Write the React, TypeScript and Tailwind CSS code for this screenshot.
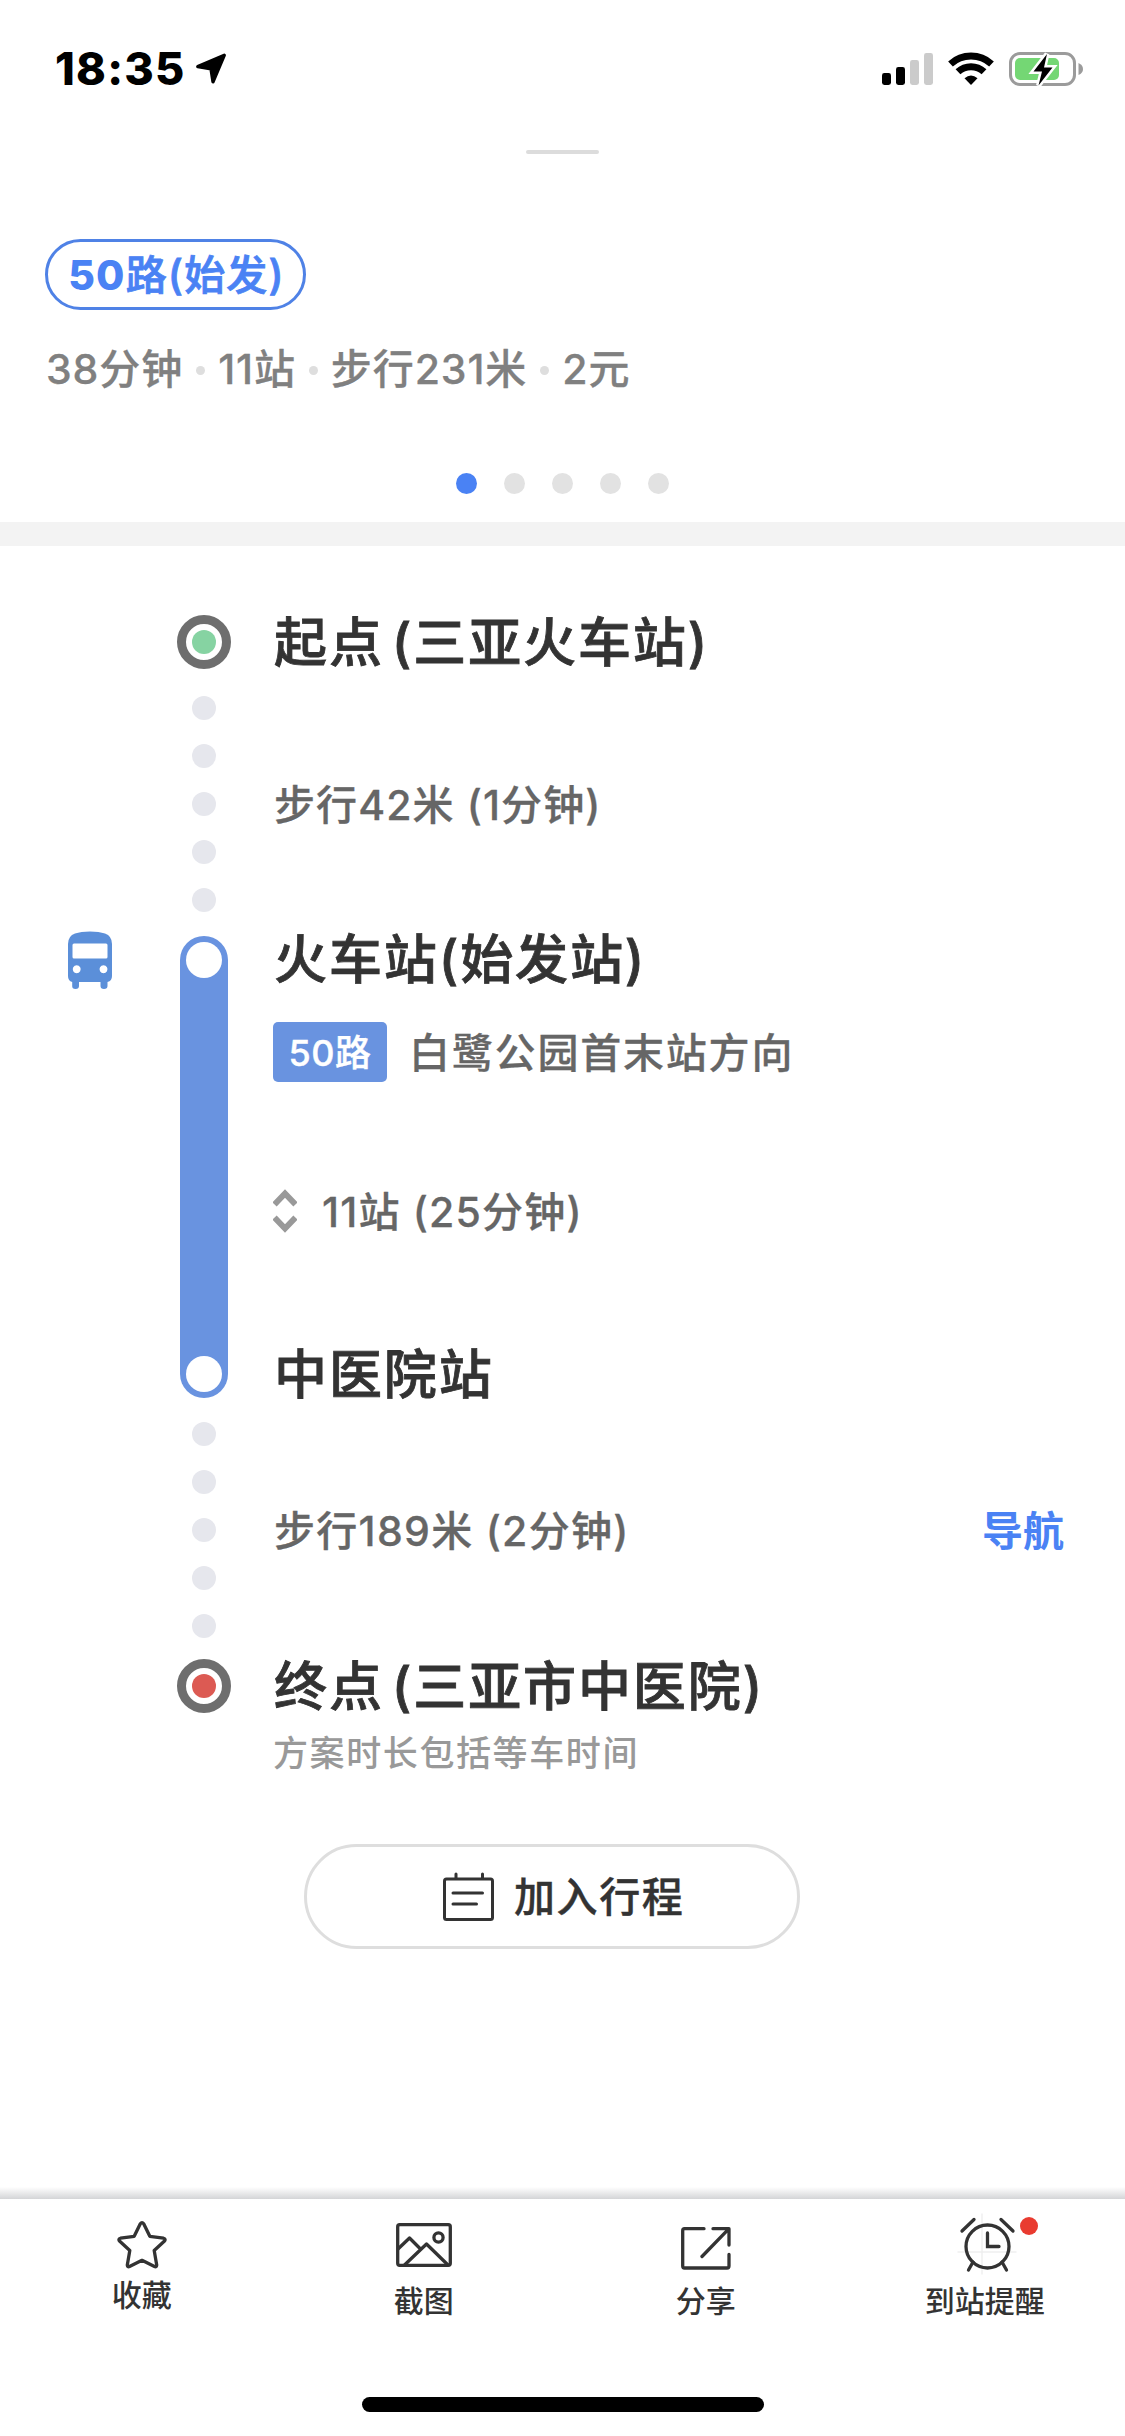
import React from "react";

const ink = "#333333";

function StatusBar() {
  return (
    <div className="flex h-[150px] items-start justify-between pl-[55px] pr-[42px]">
      <div className="flex items-start">
        <span className="mt-[46px] w-[140px] text-[45px] font-extrabold leading-[46px] tracking-[1.2px] text-black">18:35</span>
        <svg className="mt-[53px]" width="32" height="32" viewBox="0 0 32 32">
          <path d="M29.300 2.200 2.800 13.500 16 15.800 18 28.800Z" fill="#000" stroke="#000" strokeWidth="3.400" strokeLinejoin="round" />
        </svg>
      </div>
      <svg className="mt-[50px]" width="202" height="38" viewBox="0 0 202 38">
        <rect x="1" y="23" width="9" height="12" rx="2.4" fill="#000" />
        <rect x="15" y="17" width="9" height="18" rx="2.4" fill="#000" />
        <rect x="29" y="10" width="9" height="25" rx="2.4" fill="#cbcbcb" />
        <rect x="43" y="3" width="9" height="32" rx="2.4" fill="#cbcbcb" />
        <g fill="none" stroke="#000">
          <path d="M69.500 14A30.500 30.500 0 0 1 110.500 14" strokeWidth="7" />
          <path d="M77 21.800A19 19 0 0 1 103 21.800" strokeWidth="7" />
        </g>
        <path d="M83.500 28.300Q90 22.500 96.500 28.300L90 35Z" fill="#000" />
        <rect x="129.500" y="3.500" width="64" height="31" rx="9.500" fill="none" stroke="#9b9b9b" strokeWidth="3" />
        <path d="M197.500 13Q202 15 202 19T197.500 25Z" fill="#9b9b9b" />
        <rect x="134" y="8" width="44" height="22" rx="5" fill="#74d774" />
        <path d="M166 4 152.500 21.500H161L157.500 35.500 171.500 17.500H163Z" fill="#000" stroke="#fff" strokeWidth="5" paintOrder="stroke" />
      </svg>
    </div>
  );
}

function Separator() {
  return <span className="ml-[13px] mr-[13px] mt-[2px] size-[9px] rounded-full bg-[#dedede]" />;
}

function RouteSummary() {
  return (
    <div className="flex h-[372px] flex-col">
      <div className="mx-auto h-[4px] w-[73px] rounded-full bg-[#dcdcdc]" />
      <div className="ml-[45px] mt-[85px] flex h-[71px] w-[261px] items-center justify-center whitespace-nowrap rounded-full border-[3px] border-[#4f82e6] pl-[2px] pt-[2px] text-[41px] leading-none tracking-[1.200px] text-[#4a82f4]">
        <span className="font-extrabold">50</span>
        <span className="font-medium [-webkit-text-stroke:0.800px_#4a82f4]">路(始发)</span>
      </div>
      <div className="ml-[46px] mt-[36px] flex h-[46px] items-center whitespace-nowrap text-[41px] font-medium leading-none tracking-[0.900px] text-[#808080] [-webkit-text-stroke:0.300px_#808080]">
        <span>38分钟</span>
        <Separator />
        <span>11站</span>
        <Separator />
        <span>步行231米</span>
        <Separator />
        <span>2元</span>
      </div>
      <div className="mt-[81px] flex justify-center gap-[27px]">
        <span className="size-[21px] rounded-full bg-[#4a82f4]" />
        <span className="size-[21px] rounded-full bg-[#e2e2e2]" />
        <span className="size-[21px] rounded-full bg-[#e2e2e2]" />
        <span className="size-[21px] rounded-full bg-[#e2e2e2]" />
        <span className="size-[21px] rounded-full bg-[#e2e2e2]" />
      </div>
    </div>
  );
}

function Ring({ fill }: { fill: string }) {
  return (
    <div className="flex size-[54px] shrink-0 items-center justify-center rounded-full border-[9px] border-[#6e6e6e]">
      <span className={`size-[24px] rounded-full ${fill}`} />
    </div>
  );
}

function WalkDots() {
  return (
    <div className="flex h-[216px] w-[54px] shrink-0 flex-col items-center justify-between">
      {[0, 1, 2, 3, 4].map((i) => (
        <span key={i} className="size-[24px] rounded-full bg-[#e6e7ed]" />
      ))}
    </div>
  );
}

function BusIcon() {
  return (
    <svg width="44" height="58" viewBox="0 0 44 58">
      <path
        fill="#5b8fd9"
        fillRule="evenodd"
        d="M0 13Q0 5 7 2.500Q13 0.500 22 0.500T37 2.500Q44 5 44 13V45Q44 50 39.500 51V55Q39.500 58 36 58T32.500 55V51H11V55Q11 58 7.500 58T4.200 55V51Q0 50 0 45ZM6 12.500Q4.500 12.500 4.500 14V26Q4.500 27.500 6 27.500H38Q39.500 27.500 39.500 26V14Q39.500 12.500 38 12.500ZM8.700 34.300a4 4 0 1 0 .01 0ZM35.500 34.300a4 4 0 1 0 .01 0Z"
      />
    </svg>
  );
}

const title =
  "whitespace-nowrap pt-[2px] text-[53px] font-medium leading-[52px] tracking-[1.900px] text-[#333333] [word-spacing:-8px] [-webkit-text-stroke:0.800px_#333333]";
const detail =
  "whitespace-nowrap pt-[2px] text-[41px] font-medium leading-[40px] text-[#666666] [-webkit-text-stroke:0.300px_#666666]";

function Timeline() {
  return (
    <div className="flex flex-col pl-[177px] pt-[69px]">
      <div className="flex items-center">
        <Ring fill="bg-[#86d3a2]" />
        <span className={`ml-[43px] ${title}`}>起点 (三亚火车站)</span>
      </div>

      <div className="mt-[27px] flex items-center">
        <WalkDots />
        <span className={`ml-[43px] tracking-[1.100px] ${detail}`}>步行42米 (1分钟)</span>
      </div>

      <div className="-ml-[109px] mt-[24px] flex h-[462px]">
        <div className="-mt-[5px] w-[112px] shrink-0">
          <BusIcon />
        </div>
        <div className="flex h-[462px] w-[48px] shrink-0 flex-col items-center justify-between rounded-full bg-[#6993e0] py-[6px]">
          <span className="size-[36px] rounded-full bg-white" />
          <span className="size-[36px] rounded-full bg-white" />
        </div>
        <div className="ml-[45px] flex flex-col items-start">
          <span className={`-mt-[4px] ml-[1px] ${title}`}>火车站(始发站)</span>
          <div className="mt-[36px] flex h-[60px] items-center">
            <span className="flex h-[60px] w-[114px] items-center justify-center rounded-[5px] bg-[#6993e0] pt-[2px] text-[36px] font-medium leading-none tracking-[0.500px] text-white [-webkit-text-stroke:0.400px_#fff]">
              50路
            </span>
            <span className={`ml-[22px] tracking-[1.800px] ${detail}`}>白鹭公园首末站方向</span>
          </div>
          <div className="mt-[107px] flex h-[44px] items-center">
            <svg width="24" height="44" viewBox="0 0 24 44" fill="none" stroke="#999" strokeWidth="6">
              <path d="M1.500 15.500 12 4.500 22.500 15.500M1.500 28.500 12 39.500 22.500 28.500" />
            </svg>
            <span className={`ml-[25px] tracking-[1.200px] ${detail}`}>11站 (25分钟)</span>
          </div>
          <span className={`ml-[1px] mt-[114px] ${title}`}>中医院站</span>
        </div>
      </div>

      <div className="mt-[24px] flex items-center">
        <WalkDots />
        <span className={`ml-[43px] tracking-[1.300px] ${detail}`}>步行189米 (2分钟)</span>
        <span className="ml-auto mr-[61px] pt-[2px] text-[41px] font-bold leading-[40px] text-[#4a82f4]">导航</span>
      </div>

      <div className="mt-[21px] flex items-center">
        <Ring fill="bg-[#dc5a53]" />
        <span className={`ml-[43px] ${title}`}>终点 (三亚市中医院)</span>
      </div>
      <span className="ml-[96px] mt-[22px] whitespace-nowrap text-[35px] font-medium leading-[36px] tracking-[1.600px] text-[#999999]">
        方案时长包括等车时间
      </span>
    </div>
  );
}

function AddTripButton() {
  return (
    <button className="ml-[304px] mt-[73px] flex h-[105px] w-[496px] items-center rounded-[54px] border-[3px] border-[#dedede] pl-[136px]">
      <svg width="52" height="50" viewBox="0 0 52 50" fill="none" stroke={ink} strokeWidth="3" strokeLinecap="round">
        <rect x="1.500" y="7" width="48" height="40.500" rx="2" />
        <path d="M13 2V6M39.500 2V6M10 21H39.500M10 32H33.500" />
      </svg>
      <span className="ml-[19px] whitespace-nowrap text-[41px] font-medium leading-[42px] tracking-[1.600px] text-[#333333] [-webkit-text-stroke:0.400px_#333333]">
        加入行程
      </span>
    </button>
  );
}

const tabLabel =
  "whitespace-nowrap text-[30px] font-medium leading-[30px] text-[#333333]";

function TabBar() {
  return (
    <div className="mt-auto">
      <div className="h-[12px] bg-linear-to-b from-white to-[#d4d5d7]" />
      <div className="grid h-[198px] grid-cols-4 bg-white pl-[3px]">
        <div className="flex flex-col items-center pr-[3px] pt-[22px]">
          <svg width="50" height="48" viewBox="0 0 50 48" fill="none" stroke={ink} strokeWidth="3.300" strokeLinejoin="round">
            <path d="M23.300 2.800Q25 .7 26.700 2.800L32.800 15.300 46.500 17.200Q49 18 47.500 20L37.200 29.500 39.700 44Q39.500 46.500 37.500 45.500L25 39.300 12.500 45.500Q10.500 46.500 10.300 44L12.800 29.500 2.500 20Q1 18 3.500 17.200L17.200 15.300Z" />
          </svg>
          <span className={`mt-[11px] ${tabLabel}`}>收藏</span>
        </div>
        <div className="flex flex-col items-center pt-[24px]">
          <svg width="56" height="44" viewBox="0 0 56 44" fill="none" stroke={ink} strokeWidth="3.300" strokeLinejoin="round">
            <rect x="1.700" y="1.700" width="52.600" height="40.600" rx="2" />
            <circle cx="42.500" cy="14.500" r="4.600" />
            <path d="M2 26 13.500 15 25 26.500M8.500 42 30.500 21 52 42" />
          </svg>
          <span className={`mt-[19px] ${tabLabel}`}>截图</span>
        </div>
        <div className="flex flex-col items-center pl-[3px] pt-[28px]">
          <svg width="50" height="43" viewBox="0 0 50 43" fill="none" stroke={ink} strokeWidth="3.300" strokeLinecap="round" strokeLinejoin="round">
            <path d="M23 1.700H3.500Q1.700 1.700 1.700 3.700V39Q1.700 41 3.500 41H46Q48 41 48 39V27.500M32 1.700H48V18M47.500 2.200 21 29.500" />
          </svg>
          <span className={`mt-[16px] ${tabLabel}`}>分享</span>
        </div>
        <div className="flex flex-col items-center pt-[14px]">
          <div className="relative ml-[4px]">
            <svg width="60" height="62" viewBox="0 0 60 62" fill="none" stroke={ink} strokeWidth="3.300" strokeLinecap="round">
              <path d="M25 1V61M1 39H59" stroke="#efefef" strokeWidth="1.500" />
              <circle cx="30.500" cy="33.500" r="21.500" />
              <path d="M30.500 20V33.500H42M5 18 17 6.500M44 6.500 56 18M16 49 11.500 57M45 49 49.500 57" />
            </svg>
            <span className="absolute left-[63px] top-[4px] size-[18px] rounded-full bg-[#e93b30]" />
          </div>
          <span className={`mt-[11px] ${tabLabel}`}>到站提醒</span>
        </div>
      </div>
      <div className="h-[39px] bg-white">
        <div className="mx-auto h-[15px] w-[402px] rounded-full bg-black" />
      </div>
    </div>
  );
}

export default function App() {
  return (
    <div className="flex h-[2436px] w-[1125px] flex-col overflow-hidden bg-white font-['Inter','Noto_Sans_CJK_SC',sans-serif]">
      <StatusBar />
      <RouteSummary />
      <div className="h-[24px] bg-[#f3f3f3]" />
      <Timeline />
      <AddTripButton />
      <TabBar />
    </div>
  );
}
